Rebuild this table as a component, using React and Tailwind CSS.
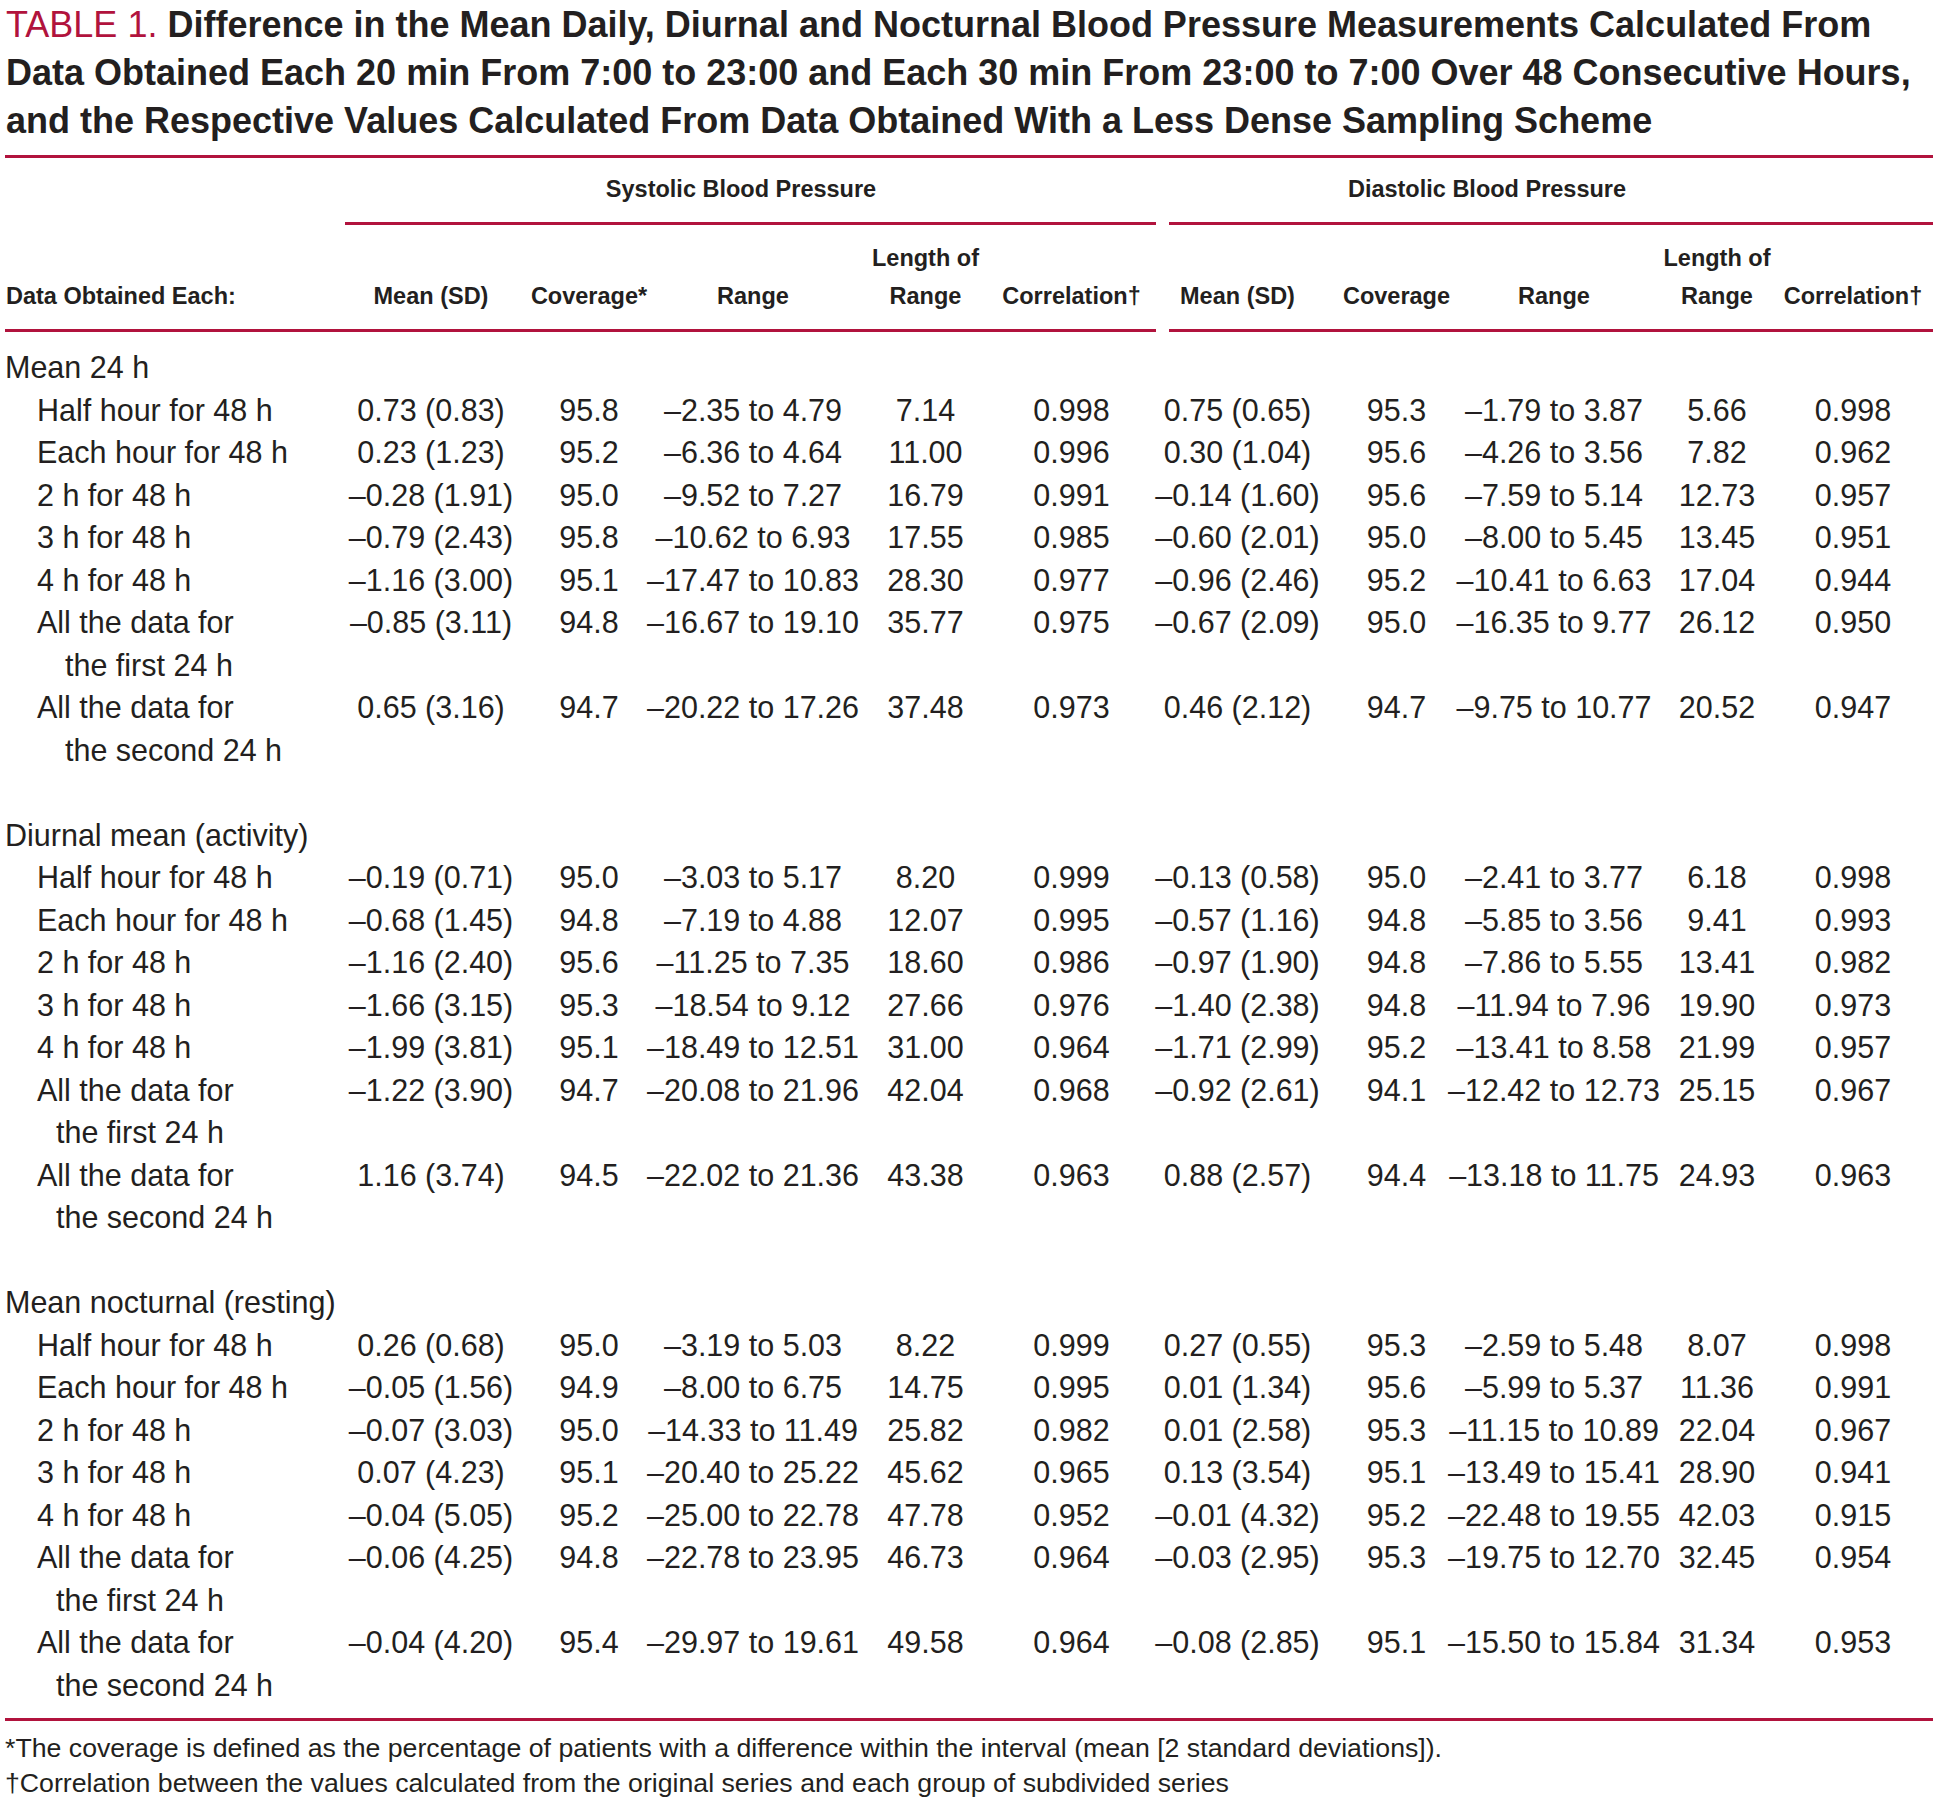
import React from "react";

const D = "\u2013";
const sections = [
  {
    title: "Mean 24 h",
    secondIndent: "pl-[60px]",
    rows: [
      ["Half hour for 48 h", null, "0.73 (0.83)", "95.8", `${D}2.35 to 4.79`, "7.14", "0.998", "0.75 (0.65)", "95.3", `${D}1.79 to 3.87`, "5.66", "0.998"],
      ["Each hour for 48 h", null, "0.23 (1.23)", "95.2", `${D}6.36 to 4.64`, "11.00", "0.996", "0.30 (1.04)", "95.6", `${D}4.26 to 3.56`, "7.82", "0.962"],
      ["2 h for 48 h", null, `${D}0.28 (1.91)`, "95.0", `${D}9.52 to 7.27`, "16.79", "0.991", `${D}0.14 (1.60)`, "95.6", `${D}7.59 to 5.14`, "12.73", "0.957"],
      ["3 h for 48 h", null, `${D}0.79 (2.43)`, "95.8", `${D}10.62 to 6.93`, "17.55", "0.985", `${D}0.60 (2.01)`, "95.0", `${D}8.00 to 5.45`, "13.45", "0.951"],
      ["4 h for 48 h", null, `${D}1.16 (3.00)`, "95.1", `${D}17.47 to 10.83`, "28.30", "0.977", `${D}0.96 (2.46)`, "95.2", `${D}10.41 to 6.63`, "17.04", "0.944"],
      ["All the data for", "the first 24 h", `${D}0.85 (3.11)`, "94.8", `${D}16.67 to 19.10`, "35.77", "0.975", `${D}0.67 (2.09)`, "95.0", `${D}16.35 to 9.77`, "26.12", "0.950"],
      ["All the data for", "the second 24 h", "0.65 (3.16)", "94.7", `${D}20.22 to 17.26`, "37.48", "0.973", "0.46 (2.12)", "94.7", `${D}9.75 to 10.77`, "20.52", "0.947"],
    ],
  },
  {
    title: "Diurnal mean (activity)",
    secondIndent: "pl-[51px]",
    rows: [
      ["Half hour for 48 h", null, `${D}0.19 (0.71)`, "95.0", `${D}3.03 to 5.17`, "8.20", "0.999", `${D}0.13 (0.58)`, "95.0", `${D}2.41 to 3.77`, "6.18", "0.998"],
      ["Each hour for 48 h", null, `${D}0.68 (1.45)`, "94.8", `${D}7.19 to 4.88`, "12.07", "0.995", `${D}0.57 (1.16)`, "94.8", `${D}5.85 to 3.56`, "9.41", "0.993"],
      ["2 h for 48 h", null, `${D}1.16 (2.40)`, "95.6", `${D}11.25 to 7.35`, "18.60", "0.986", `${D}0.97 (1.90)`, "94.8", `${D}7.86 to 5.55`, "13.41", "0.982"],
      ["3 h for 48 h", null, `${D}1.66 (3.15)`, "95.3", `${D}18.54 to 9.12`, "27.66", "0.976", `${D}1.40 (2.38)`, "94.8", `${D}11.94 to 7.96`, "19.90", "0.973"],
      ["4 h for 48 h", null, `${D}1.99 (3.81)`, "95.1", `${D}18.49 to 12.51`, "31.00", "0.964", `${D}1.71 (2.99)`, "95.2", `${D}13.41 to 8.58`, "21.99", "0.957"],
      ["All the data for", "the first 24 h", `${D}1.22 (3.90)`, "94.7", `${D}20.08 to 21.96`, "42.04", "0.968", `${D}0.92 (2.61)`, "94.1", `${D}12.42 to 12.73`, "25.15", "0.967"],
      ["All the data for", "the second 24 h", "1.16 (3.74)", "94.5", `${D}22.02 to 21.36`, "43.38", "0.963", "0.88 (2.57)", "94.4", `${D}13.18 to 11.75`, "24.93", "0.963"],
    ],
  },
  {
    title: "Mean nocturnal (resting)",
    secondIndent: "pl-[51px]",
    rows: [
      ["Half hour for 48 h", null, "0.26 (0.68)", "95.0", `${D}3.19 to 5.03`, "8.22", "0.999", "0.27 (0.55)", "95.3", `${D}2.59 to 5.48`, "8.07", "0.998"],
      ["Each hour for 48 h", null, `${D}0.05 (1.56)`, "94.9", `${D}8.00 to 6.75`, "14.75", "0.995", "0.01 (1.34)", "95.6", `${D}5.99 to 5.37`, "11.36", "0.991"],
      ["2 h for 48 h", null, `${D}0.07 (3.03)`, "95.0", `${D}14.33 to 11.49`, "25.82", "0.982", "0.01 (2.58)", "95.3", `${D}11.15 to 10.89`, "22.04", "0.967"],
      ["3 h for 48 h", null, "0.07 (4.23)", "95.1", `${D}20.40 to 25.22`, "45.62", "0.965", "0.13 (3.54)", "95.1", `${D}13.49 to 15.41`, "28.90", "0.941"],
      ["4 h for 48 h", null, `${D}0.04 (5.05)`, "95.2", `${D}25.00 to 22.78`, "47.78", "0.952", `${D}0.01 (4.32)`, "95.2", `${D}22.48 to 19.55`, "42.03", "0.915"],
      ["All the data for", "the first 24 h", `${D}0.06 (4.25)`, "94.8", `${D}22.78 to 23.95`, "46.73", "0.964", `${D}0.03 (2.95)`, "95.3", `${D}19.75 to 12.70`, "32.45", "0.954"],
      ["All the data for", "the second 24 h", `${D}0.04 (4.20)`, "95.4", `${D}29.97 to 19.61`, "49.58", "0.964", `${D}0.08 (2.85)`, "95.1", `${D}15.50 to 15.84`, "31.34", "0.953"],
    ],
  },
];

const GRID =
  "grid grid-cols-[348px_156px_160px_168px_160px_159px_163px_155px_160px_151px_136px_1fr]";

// per-column nudges (data columns 0..9)
const NUDGE = ["", "", "", "pl-[17px]", "pr-[10px]", "", "", "", "pl-[15px]", ""];

function HeadCell({ top, bottom, nudge }) {
  return (
    <div className={`flex flex-col items-center justify-end whitespace-nowrap ${nudge || ""}`}>
      {top ? <div>{top}</div> : null}
      <div>{bottom}</div>
    </div>
  );
}

function Row({ row, secondIndent }) {
  const [l1, l2, ...vals] = row;
  return (
    <div className={GRID}>
      <div className="whitespace-nowrap">
        <div className="pl-[32px]">{l1}</div>
        {l2 ? <div className={secondIndent}>{l2}</div> : null}
      </div>
      {vals.map((v, i) => (
        <div key={i} className={`flex justify-center whitespace-nowrap ${NUDGE[i]}`}>
          {v}
        </div>
      ))}
    </div>
  );
}

export default function App() {
  return (
    <div className="bg-white min-h-[1816px] w-[1937px] font-['Liberation_Sans',Arial,sans-serif] text-[#231f20]">
      <div className="w-[1928px] ml-[5px]">
        {/* Title */}
        <div className="pt-[1px] text-[36px] leading-[48px] whitespace-nowrap pl-[1px]">
          <span className="text-[#b1133d]">TABLE 1. </span>
          <span className="font-bold">
            Difference in the Mean Daily, Diurnal and Nocturnal Blood Pressure Measurements Calculated From
            <br />
            Data Obtained Each 20 min From 7:00 to 23:00 and Each 30 min From 23:00 to 7:00 Over 48 Consecutive Hours,
            <br />
            and the Respective Values Calculated From Data Obtained With a Less Dense Sampling Scheme
          </span>
        </div>

        <div className="mt-[10px] h-[3px] bg-[#b1133d]" />

        {/* Header */}
        <div className="font-bold text-[23.5px]">
          <div className={`${GRID} h-[64px] items-center`}>
            <div />
            <div className="col-span-5 flex justify-center whitespace-nowrap pr-[27px]">Systolic Blood Pressure</div>
            <div className="col-span-6 flex justify-center whitespace-nowrap pr-[115px]">Diastolic Blood Pressure</div>
          </div>
          <div className={GRID}>
            <div />
            <div className="col-span-5 -ml-[8px] h-[3px] bg-[#b1133d]" />
            <div className="col-span-6 ml-[13px] h-[3px] bg-[#b1133d]" />
          </div>
          <div className={`${GRID} leading-[38px] pt-[14px] pb-[14px]`}>
            <div className="flex flex-col justify-end whitespace-nowrap pl-[1px]">Data Obtained Each:</div>
            <HeadCell bottom="Mean (SD)" nudge={NUDGE[0]} />
            <HeadCell bottom="Coverage*" nudge={NUDGE[1]} />
            <HeadCell bottom="Range" nudge={NUDGE[2]} />
            <HeadCell top="Length of" bottom="Range" nudge={NUDGE[3]} />
            <HeadCell bottom={"Correlation\u2020"} nudge={NUDGE[4]} />
            <HeadCell bottom="Mean (SD)" nudge={NUDGE[5]} />
            <HeadCell bottom="Coverage" nudge={NUDGE[6]} />
            <HeadCell bottom="Range" nudge={NUDGE[7]} />
            <HeadCell top="Length of" bottom="Range" nudge={NUDGE[8]} />
            <HeadCell bottom={"Correlation\u2020"} nudge={NUDGE[9]} />
          </div>
          <div className="flex">
            <div className="w-[1151px] h-[3px] bg-[#b1133d]" />
            <div className="w-[13px]" />
            <div className="flex-1 h-[3px] bg-[#b1133d]" />
          </div>
        </div>

        {/* Body */}
        <div className="text-[30.5px] leading-[42.5px] pt-[14px] pb-[12px]">
          {sections.map((s, si) => (
            <div key={si}>
              {si > 0 ? <div className="h-[42.5px]" /> : null}
              <div className="whitespace-nowrap">{s.title}</div>
              {s.rows.map((r, ri) => (
                <Row key={ri} row={r} secondIndent={s.secondIndent} />
              ))}
            </div>
          ))}
        </div>

        <div className="h-[3px] bg-[#b1133d]" />

        {/* Footnotes */}
        <div className="pt-[10px] text-[26.7px] leading-[35px] whitespace-nowrap">
          <div>*The coverage is defined as the percentage of patients with a difference within the interval (mean [2 standard deviations]).</div>
          <div>{"\u2020"}Correlation between the values calculated from the original series and each group of subdivided series</div>
        </div>
      </div>
    </div>
  );
}
